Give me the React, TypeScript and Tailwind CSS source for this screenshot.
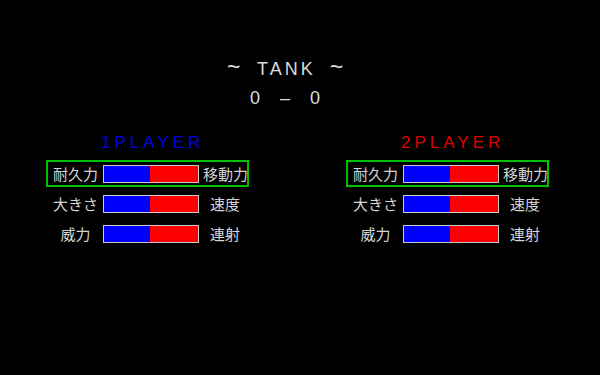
const FONT = { fontFamily: '"Liberation Sans", Arial, sans-serif' };
const JP = { fontFamily: '"Noto Sans CJK JP", "Noto Sans", sans-serif' };

interface StatRow {
  left: string;
  right: string;
  selected?: boolean;
}

const rows: StatRow[] = [
  { left: "耐久力", right: "移動力", selected: true },
  { left: "大きさ", right: "速度" },
  { left: "威力", right: "連射" },
];

function Bar() {
  return (
    <div className="flex h-[18px] w-[96px] border border-[#c8c8c8]">
      <div className="h-full w-[46px] bg-[#0000ff]" />
      <div className="h-full flex-1 bg-[#ff0000]" />
    </div>
  );
}

function PlayerPanel({ name, color }: { name: string; color: string }) {
  return (
    <section className="w-[203px]">
      <div className={`h-[17px] pl-[55px] text-[17px] leading-[17px] tracking-[4px] ${color}`} style={FONT}>
        {name}
      </div>
      <div className="mt-[9px] flex flex-col gap-[3px]">
        {rows.map((row) => (
          <div
            key={row.left}
            className={`flex h-[27px] items-center border-2 ${row.selected ? "border-[#00c000]" : "border-transparent"}`}
          >
            <span className="w-[55px] whitespace-nowrap text-center text-[15px] leading-none text-[#d4d4d4]" style={JP}>
              {row.left}
            </span>
            <Bar />
            <span className="w-[48px] whitespace-nowrap pl-[4px] text-center text-[15px] leading-none text-[#d4d4d4]" style={JP}>
              {row.right}
            </span>
          </div>
        ))}
      </div>
    </section>
  );
}

export default function App() {
  return (
    <div className="h-[375px] w-[600px] overflow-hidden bg-black pt-[58px] text-[#dcdcdc]" style={FONT}>
      <div className="flex h-[18px] items-baseline pl-[227px] text-[18px] leading-[18px]">
        <span className="w-[13px] text-[23px]">~</span>
        <span className="ml-[17px] tracking-[3px]">TANK</span>
        <span className="ml-[14px] w-[13px] text-[23px]">~</span>
      </div>
      <div className="mt-[13px] flex h-[18px] gap-[20px] pl-[250px] text-[18px] leading-[18px]">
        <span className="w-[10px] text-center">0</span>
        <span className="w-[10px] text-center">–</span>
        <span className="w-[10px] text-center">0</span>
      </div>
      <div className="mt-[27px] flex gap-[97px] pl-[46px]">
        <PlayerPanel name="1PLAYER" color="text-[#0000e0]" />
        <PlayerPanel name="2PLAYER" color="text-[#dd0000]" />
      </div>
    </div>
  );
}
